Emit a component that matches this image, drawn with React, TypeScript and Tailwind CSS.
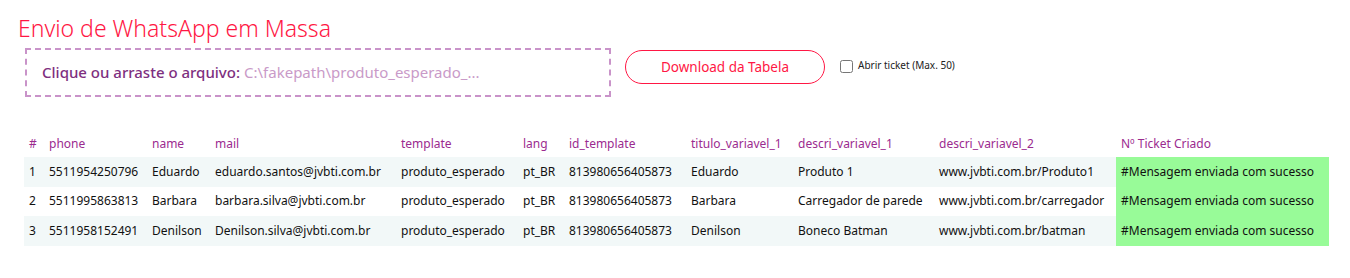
import { useState } from 'react';

const columns = [
  { key: '#', width: 'w-[20px]' },
  { key: 'phone', width: 'w-[103px]' },
  { key: 'name', width: 'w-[63px]' },
  { key: 'mail', width: 'w-[186px]' },
  { key: 'template', width: 'w-[122px]' },
  { key: 'lang', width: 'w-[46px]' },
  { key: 'id_template', width: 'w-[122px]' },
  { key: 'titulo_variavel_1', width: 'w-[107px]' },
  { key: 'descri_variavel_1', width: 'w-[141px]' },
  { key: 'descri_variavel_2', width: 'w-[182px]' },
  { key: 'Nº Ticket Criado', width: 'w-[213px]' }
];

const rows = [
  ['1', '5511954250796', 'Eduardo', 'eduardo.santos@jvbti.com.br', 'produto_esperado', 'pt_BR', '813980656405873', 'Eduardo', 'Produto 1', 'www.jvbti.com.br/Produto1'],
  ['2', '5511995863813', 'Barbara', 'barbara.silva@jvbti.com.br', 'produto_esperado', 'pt_BR', '813980656405873', 'Barbara', 'Carregador de parede', 'www.jvbti.com.br/carregador'],
  ['3', '5511958152491', 'Denilson', 'Denilson.silva@jvbti.com.br', 'produto_esperado', 'pt_BR', '813980656405873', 'Denilson', 'Boneco Batman', 'www.jvbti.com.br/batman']
];

export default function App() {
  const [openTicket, setOpenTicket] = useState(false);

  return (
    <div className="min-h-[278px] bg-white pl-[18px] pt-[13px] font-['Noto_Sans',sans-serif] text-[#222]">
      <h1 className="text-[23px] font-light leading-[30px] text-[#ff1744]">Envio de WhatsApp em Massa</h1>

      <div className="mt-[5px] flex items-start pl-[7px]">
        <label className="flex h-[49px] w-[586px] cursor-pointer items-center border-2 border-dashed border-[#c993c9] pl-[15px] text-[15px]">
          <span className="font-medium text-[#7e2f80]">Clique ou arraste o arquivo:</span>
          <span className="ml-[4px] text-[#c99ac8]">C:\fakepath\produto_esperado_...</span>
        </label>

        <button
          type="button"
          className="ml-[14px] mt-[2px] h-[34px] w-[200px] rounded-full border border-[#ff1744] text-[13.5px] text-[#ff1744]"
        >
          Download da Tabela
        </button>

        <label className="ml-[15px] mt-[12px] flex items-center gap-[5px] text-[10px] text-[#222]">
          <input
            type="checkbox"
            checked={openTicket}
            onChange={(event) => setOpenTicket(event.target.checked)}
            className="h-[13px] w-[13px]"
          />
          <span className="-mt-[3px]">Abrir ticket (Max. 50)</span>
        </label>
      </div>

      <table className="mt-[36px] ml-[6px] w-[1305px] table-fixed border-collapse text-left text-[12px]">
        <thead>
          <tr className="h-[24px]">
            {columns.map((col) => (
              <th key={col.key} className={`${col.width} whitespace-nowrap pl-[5px] pb-[2px] align-middle font-normal text-[#9b2b8f]`}>
                {col.key}
              </th>
            ))}
          </tr>
        </thead>
        <tbody>
          {rows.map((row, index) => (
            <tr key={row[0]} className={index % 2 === 0 ? 'h-[29.5px] bg-[#f2f8f8]' : 'h-[29.5px] bg-white'}>
              {row.map((cell, i) => (
                <td key={i} className="whitespace-nowrap pl-[5px] align-middle text-[#111]">
                  {cell}
                </td>
              ))}
              <td className="whitespace-nowrap bg-[#98fb98] pl-[5px] align-middle text-[#111]">#Mensagem enviada com sucesso</td>
            </tr>
          ))}
        </tbody>
      </table>
    </div>
  );
}
